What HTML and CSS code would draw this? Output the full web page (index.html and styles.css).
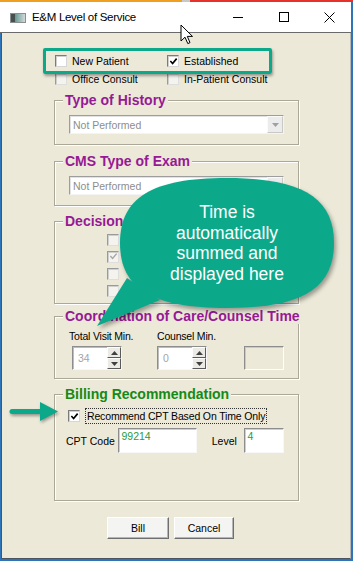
FILE: index.html
```html
<!DOCTYPE html>
<html>
<head>
<meta charset="utf-8">
<link rel="stylesheet" href="styles.css">
</head>
<body>
<div class="window">
  <div class="topline"></div>
  <div class="titlebar">
    <svg class="app-icon" width="16" height="10" viewBox="0 0 16 10">
      <defs><linearGradient id="ig" x1="0" x2="1" y1="0" y2="0"><stop offset="0" stop-color="#3d6b66"/><stop offset="0.45" stop-color="#7fa9a3"/><stop offset="1" stop-color="#d8dcdc"/></linearGradient></defs>
      <rect x="0.5" y="0.5" width="15" height="9" fill="url(#ig)" stroke="#8a8f8f"/>
      <rect x="1" y="1" width="4" height="8" fill="#45504f"/>
    </svg>
    <span class="title">E&amp;M Level of Service</span>
    <div class="controls">
      <span class="ctl"><svg width="10" height="10" viewBox="0 0 10 10"><path d="M0 5.5H10" stroke="#000" stroke-width="1"/></svg></span>
      <span class="ctl"><svg width="10" height="10" viewBox="0 0 10 10"><rect x="0.5" y="0.5" width="9" height="9" fill="none" stroke="#000"/></svg></span>
      <span class="ctl"><svg width="11" height="11" viewBox="0 0 11 11"><path d="M0.5 0.5L10.5 10.5M10.5 0.5L0.5 10.5" stroke="#000" stroke-width="1"/></svg></span>
    </div>
  </div>
  <div class="client">
    <div class="patient">
      <label class="opt"><span class="cb"></span>New Patient</label>
      <label class="opt"><span class="cb"><svg viewBox="0 0 10 10"><path d="M1.5 4.5L4 7.2L8.5 1.8" fill="none" stroke="#000" stroke-width="1.8"/></svg></span>Established</label>
      <label class="opt"><span class="cb cb-dis"></span>Office Consult</label>
      <label class="opt"><span class="cb cb-dis"></span>In-Patient Consult</label>
    </div>

    <div class="group g1">
      <div class="group-title">Type of History</div>
      <div class="combo"><span class="combo-text">Not Performed</span><span class="combo-btn"><svg width="7" height="4" viewBox="0 0 7 4"><path d="M0 0H7L3.5 4Z" fill="#a0a0a0"/></svg></span></div>
    </div>

    <div class="group g2">
      <div class="group-title">CMS Type of Exam</div>
      <div class="combo"><span class="combo-text">Not Performed</span><span class="combo-btn"><svg width="7" height="4" viewBox="0 0 7 4"><path d="M0 0H7L3.5 4Z" fill="#a0a0a0"/></svg></span></div>
    </div>

    <div class="group g3">
      <div class="group-title">Decision Making</div>
      <div class="dec-list">
        <span class="cb cb-dis"></span>
        <span class="cb cb-dis"><svg viewBox="0 0 10 10"><path d="M1.5 4.5L4 7.2L8.5 1.8" fill="none" stroke="#a8a8a8" stroke-width="1.6"/></svg></span>
        <span class="cb cb-dis"></span>
        <span class="cb cb-dis"></span>
      </div>
    </div>

    <div class="group g4">
      <div class="group-title">Coordination of Care/Counsel Time</div>
      <div class="coord">
        <div class="ccol c1">
          <div class="clabel">Total Visit Min.</div>
          <div class="spin"><span class="spin-val">34</span><span class="spin-btns"><span class="sb"><svg width="7" height="4" viewBox="0 0 7 4"><path d="M0 4H7L3.5 0Z" fill="#404040"/></svg></span><span class="sb"><svg width="7" height="4" viewBox="0 0 7 4"><path d="M0 0H7L3.5 4Z" fill="#404040"/></svg></span></span></div>
        </div>
        <div class="ccol c2">
          <div class="clabel">Counsel Min.</div>
          <div class="spin"><span class="spin-val">0</span><span class="spin-btns"><span class="sb"><svg width="7" height="4" viewBox="0 0 7 4"><path d="M0 4H7L3.5 0Z" fill="#404040"/></svg></span><span class="sb"><svg width="7" height="4" viewBox="0 0 7 4"><path d="M0 0H7L3.5 4Z" fill="#404040"/></svg></span></span></div>
        </div>
        <div class="ccol c3">
          <div class="clabel"></div>
          <div class="emptybox"></div>
        </div>
      </div>
    </div>

    <div class="group g5">
      <div class="group-title green">Billing Recommendation</div>
      <div class="bill-check">
        <span class="cb"><svg viewBox="0 0 10 10"><path d="M1.5 4.5L4 7.2L8.5 1.8" fill="none" stroke="#000" stroke-width="1.8"/></svg></span>
        <span class="focus-label">Recommend CPT Based On Time Only</span>
      </div>
      <div class="cpt-row">
        <span class="cpt-label">CPT Code</span>
        <span class="field f-cpt">99214</span>
        <span class="level-label">Level</span>
        <span class="field f-level">4</span>
      </div>
    </div>

    <div class="buttons">
      <span class="btn b-bill">Bill</span>
      <span class="btn b-cancel">Cancel</span>
    </div>
  </div>

  <div class="highlight"></div>

  <svg class="arrow" width="58" height="28" viewBox="0 0 58 28">
    <g transform="translate(-6,-398)">
      <path d="M12 409H42V414H12A2.5 2.5 0 0 1 12 409Z" fill="#0ba98a"/>
      <path d="M40 402L58 411.5L40 421Z" fill="#0ba98a"/>
    </g>
  </svg>

  <svg class="bubble" width="250" height="162" viewBox="0 0 250 162">
    <g transform="translate(-90,-172)" fill="#0ba98a">
      <path d="M227 178C302 178 334 197.5 334 243C334 288.5 302 308 227 308C152 308 120 288.5 120 243C120 197.5 152 178 227 178Z"/>
      <path d="M127 278L160 300L97 326Z"/>
    </g>
  </svg>
  <div class="bubble-text">Time is<br>automatically<br>summed and<br>displayed here</div>

  <svg class="cursor" width="14" height="21" viewBox="0 0 14 21">
    <path d="M1 1L1 17L5 13.2L7.8 19.6L10 18.6L7.3 12.4L12.5 12.4Z" fill="#fff" stroke="#000" stroke-width="1" stroke-linejoin="round"/>
  </svg>
</div>
</body>
</html>
```

FILE: styles.css
```css
* { box-sizing: border-box; }
html, body { margin: 0; padding: 0; }
body {
  width: 353px;
  height: 561px;
  overflow: hidden;
  background: #2a6db0;
  font-family: "Liberation Sans", Arial, sans-serif;
  font-size: 10.5px;
  color: #000;
}
.window {
  position: relative;
  width: 353px;
  height: 561px;
  display: flex;
  flex-direction: column;
  background: #2d74b9;
}
.topline {
  height: 2px;
  background: linear-gradient(to right, #f0a020 0, #f0a020 182px, #c8c8c8 182px, #c8c8c8 190px, #e5322a 190px);
}
.titlebar {
  height: 31px;
  background: #fff;
  border-bottom: 1px solid #6a6a6a;
  display: flex;
  align-items: center;
  margin-right: 2px;
}
.app-icon { margin-left: 10px; margin-top: 1px; }
.title {
  margin-left: 6px;
  font-size: 11.5px;
  letter-spacing: -0.3px;
  color: #000;
}
.controls { margin-left: auto; display: flex; }
.ctl {
  width: 46px;
  height: 30px;
  display: flex;
  align-items: center;
  justify-content: center;
}
.controls .ctl:last-child { width: 44px; }

.client {
  flex: 1;
  background: #ece9d8;
  margin: 0 2px 2px 1px;
  border-left: 1px solid #4d5560;
  border-right: 1px solid #b8b8b8;
  border-bottom: 1px solid #4d5560;
}

/* checkboxes */
.cb {
  width: 12px;
  height: 12px;
  flex: none;
  display: inline-flex;
  align-items: center;
  justify-content: center;
  background: #fff;
  border: 1px solid;
  border-color: #7b7b7b #d6d6d6 #d6d6d6 #7b7b7b;
  box-shadow: inset 1px 1px 0 #cfcfcf;
}
.cb svg { width: 9px; height: 9px; }
.cb-dis { background: #f4f3ee; border-color: #9a9a9a #dedede #dedede #9a9a9a; }

.patient {
  display: grid;
  grid-template-columns: 112px 112px;
  grid-auto-rows: 18px;
  margin: 19px 0 0 53px;
}
.opt { display: flex; align-items: center; gap: 5px; white-space: nowrap; }

/* group boxes */
.group {
  width: 245px;
  margin-left: 52px;
  border: 1px solid #aca899;
  box-shadow: inset 1px 1px 0 #fff, 1px 1px 0 #fff;
  padding: 0 14px;
}
.group-title {
  width: max-content;
  height: 16px;
  line-height: 16px;
  margin: -9px 0 0 -6px;
  padding: 0 2px;
  background: #ece9d8;
  color: #961995;
  font-size: 14px;
  font-weight: bold;
  white-space: nowrap;
}
.group-title.green { color: #168a16; }
.g1 { margin-top: 12px; padding-bottom: 10px; }
.g2 { margin-top: 16px; padding-bottom: 10px; }
.g3 { margin-top: 15px; padding-bottom: 4px; }
.g4 { margin-top: 12px; padding-bottom: 8px; }
.g5 { margin-top: 15px; height: 107px; }

.combo {
  margin-top: 7px;
  height: 19px;
  display: flex;
  align-items: center;
  background: #fff;
  border: 1px solid;
  border-color: #9d9d9d #f4f4f4 #f4f4f4 #9d9d9d;
  box-shadow: inset 1px 1px 0 #e2e2e2;
  color: #8d8d8d;
  padding-left: 3px;
}
.combo-btn {
  margin-left: auto;
  margin-right: 0;
  width: 16px;
  height: 17px;
  display: flex;
  align-items: center;
  justify-content: center;
  background: #ececec;
  border: 1px solid;
  border-color: #fafafa #c8c8c8 #c8c8c8 #fafafa;
}

.dec-list {
  display: grid;
  grid-auto-rows: 17px;
  align-items: center;
  margin: 2px 0 0 38px;
}

.coord { display: flex; margin-top: 6px; }
.ccol { display: flex; flex-direction: column; }
.c1 { width: 89px; }
.c2 { width: 88px; }
.clabel { height: 13px; line-height: 13px; white-space: nowrap; letter-spacing: -0.2px; }
.c1 .spin { margin-left: 3px; }
.spin {
  margin-top: 3px;
  width: 50px;
  height: 24px;
  display: flex;
  background: #fff;
  border: 1px solid;
  border-color: #8d8d8d #f8f8f8 #f8f8f8 #8d8d8d;
  box-shadow: inset 1px 1px 0 #bdbdbd;
}
.spin-val { flex: 1; color: #a4a4a4; padding: 5px 0 0 5px; line-height: 13px; }
.spin-btns { width: 14px; display: flex; flex-direction: column; }
.sb {
  flex: 1;
  display: flex;
  align-items: center;
  justify-content: center;
  background: #ebeae4;
  border: 1px solid;
  border-color: #fdfdfd #5a5a5a #5a5a5a #fdfdfd;
}
.emptybox {
  margin-top: 3px;
  width: 40px;
  height: 24px;
  border: 1px solid;
  border-color: #8d8d8d #ffffff #ffffff #8d8d8d;
  box-shadow: inset 1px 1px 0 #c9c9c9;
}

.bill-check {
  display: flex;
  align-items: center;
  margin: 6px 0 0 -1px;
  height: 16px;
}
.focus-label {
  margin-left: 5px;
  height: 16px;
  line-height: 14px;
  padding: 0 1px;
  border: 1px dotted #333;
  white-space: nowrap;
  letter-spacing: -0.15px;
}
.cpt-row {
  display: flex;
  align-items: center;
  margin: 4px 0 0 -3px;
}
.cpt-label { width: 53px; white-space: nowrap; }
.level-label { margin-left: 15px; width: 33px; }
.field {
  height: 25px;
  background: #fff;
  border: 1px solid;
  border-color: #8d8d8d #f8f8f8 #f8f8f8 #8d8d8d;
  box-shadow: inset 1px 1px 0 #cfcfcf;
  color: #2b9a40;
  padding: 1px 0 0 2px;
  line-height: 13px;
}
.f-cpt { width: 79px; }
.f-level { width: 40px; }

.buttons {
  display: flex;
  gap: 5px;
  margin: 16px 0 0 105px;
}
.btn {
  height: 22px;
  display: flex;
  align-items: center;
  justify-content: center;
  background: #f4f4f2;
  border: 1px solid;
  border-color: #ffffff #6f6f6f #6f6f6f #ffffff;
  box-shadow: inset -1px -1px 0 #b5b5b5;
}
.b-bill { width: 62px; }
.b-cancel { width: 60px; }

/* overlays */
.highlight {
  position: absolute;
  left: 43px;
  top: 48px;
  width: 229px;
  height: 26px;
  border: 3px solid #0ba98a;
  border-radius: 2px;
  box-shadow: 1px 2px 3px rgba(0,0,0,0.35);
}
.arrow {
  position: absolute;
  left: 6px;
  top: 398px;
  filter: drop-shadow(1px 2px 1.5px rgba(0,0,0,0.35));
}
.bubble {
  position: absolute;
  left: 90px;
  top: 172px;
  filter: drop-shadow(2px 3px 2px rgba(0,0,0,0.35));
}
.bubble-text {
  position: absolute;
  left: 120px;
  top: 202px;
  width: 214px;
  text-align: center;
  color: #fff;
  font-size: 17.5px;
  line-height: 20.7px;
}
.cursor {
  position: absolute;
  left: 180px;
  top: 24px;
}
```
